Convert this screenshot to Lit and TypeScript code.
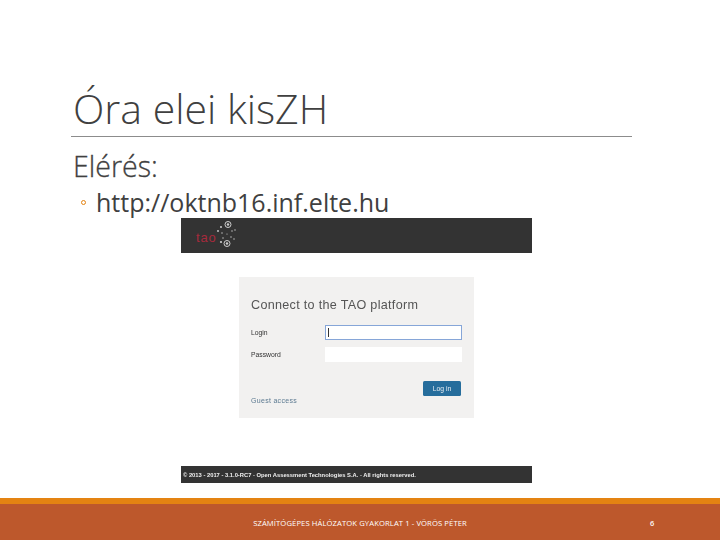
import { LitElement, html, css } from "lit";
import { customElement } from "lit/decorators.js";

@customElement("app-root")
export class AppRoot extends LitElement {
  static styles = css`
    :host { display: block; width: 720px; height: 540px; background: #fff; overflow: hidden; font-family: "Open Sans", "Noto Sans", sans-serif; color: #404040; }
    .slide { width: 720px; height: 540px; display: flex; flex-direction: column; }
    .main { flex: 1; display: flex; flex-direction: column; padding: 0 88px 0 71px; min-height: 0; }
    .title { box-sizing: border-box; border-bottom: 1px solid #8c8c8c; display: flex; align-items: flex-end; padding: 0 0 1px 2px; font-size: 41px; font-weight: 300; line-height: 54px; color: #404040; flex: none; height: 137px; }
    .l1 { margin: 12px 0 0 2px; font-size: 28.6px; font-weight: 300; line-height: 34px; -webkit-text-stroke: 0.3px #404040; flex: none; }
    .l2 { margin: 3px 0 0 10px; font-size: 25px; line-height: 32px; display: flex; align-items: center; gap: 10px; height: 32px; flex: none; }
    .dot { width: 5px; height: 5px; box-sizing: border-box; border: 1px solid #e48312; border-radius: 50%; flex: none; }
    .shot { width: 351px; height: 265px; flex: none; margin: 0 0 0 110px; display: flex; flex-direction: column; font-family: "Liberation Sans", sans-serif; }
    .head { height: 35px; background: #333; flex: none; display: flex; align-items: center; padding-left: 15px; }
    .head svg { display: block; }
    .body { flex: 1; display: flex; justify-content: center; align-items: flex-start; padding-top: 24px; }
    .card { width: 235px; height: 141px; background: #f2f1f0; box-sizing: border-box; padding: 20px 12px 0 12px; display: flex; flex-direction: column; }
    .card h2 { margin: 0; font-size: 12.6px; line-height: 16px; font-weight: 400; color: #555; white-space: nowrap; letter-spacing: 0.3px; filter: blur(0.3px); }
    .row { display: flex; align-items: center; height: 15px; margin-top: 7px; font-size: 6.8px; color: #333; }
    .row.first { margin-top: 12px; }
    .row label { width: 74px; filter: blur(0.25px); }
    .input { width: 137px; height: 15px; box-sizing: border-box; background: #fff; flex: none; display: flex; align-items: center; padding-left: 2px; }
    .input.focus { border: 1px solid #86a6d8; }
    .caret { width: 1px; height: 9px; background: #333; }
    .actions { display: flex; justify-content: flex-end; margin-top: 19px; }
    .btn { width: 38px; height: 15px; margin-right: 1px; background: #266d9c; border-radius: 1.5px; color: #e8eef3; font-size: 6.8px; display: flex; align-items: center; justify-content: center; filter: blur(0.25px); }
    .guest { font-size: 7px; line-height: 8px; color: #5b7990; filter: blur(0.25px); letter-spacing: 0.3px; margin-top: 1px; }
    .foot { height: 17px; background: #333; flex: none; color: #f0f0f0; font-size: 5.8px; display: flex; align-items: center; padding-left: 2px; white-space: nowrap; filter: blur(0.25px); font-weight: 700; }
    .bar { height: 6px; background: #e48312; flex: none; }
    .footer { height: 36px; background: #bd582c; flex: none; display: grid; grid-template-columns: 1fr 60px; align-items: center; color: #fff; }
    .ft { font-size: 7.65px; text-align: center; letter-spacing: 0.1px; padding-left: 60px; margin-top: 2px; white-space: nowrap; }
    .num { font-size: 7.4px; margin-left: -10px; margin-top: 2px; font-weight: 600; }
  `;

  render() {
    return html`<div class="slide">
      <div class="main">
        <div class="title">Óra elei kisZH</div>
        <div class="l1">Elérés:</div>
        <div class="l2"><span class="dot"></span><span>http://oktnb16.inf.elte.hu</span></div>
        <div class="shot">
          <div class="head">
            <svg width="42" height="30" viewBox="0 0 42 30">
              <text x="0" y="21" font-family="Liberation Sans, sans-serif" font-size="13" fill="#a62a3c" letter-spacing="0.8">tao</text>
              <g fill="none" stroke="#cfcfcf" stroke-width="1">
                <circle cx="32" cy="3.5" r="3"/><circle cx="31" cy="22.5" r="3"/>
              </g>
              <g fill="#cfcfcf">
                <circle cx="32" cy="3.5" r="1.2"/><circle cx="31" cy="22.5" r="1.2"/>
                <circle cx="25" cy="6" r="1"/><circle cx="22" cy="10" r="0.9"/><circle cx="26" cy="12" r="0.7"/>
                <circle cx="36" cy="10" r="0.7"/><circle cx="39" cy="9" r="0.7"/><circle cx="35" cy="16" r="0.7"/>
                <circle cx="38" cy="18" r="0.7"/><circle cx="25" cy="21" r="1.1"/><circle cx="27" cy="17" r="0.7"/>
                <circle cx="31" cy="13" r="0.6"/>
              </g>
            </svg>
          </div>
          <div class="body">
            <div class="card">
              <h2>Connect to the TAO platform</h2>
              <div class="row first"><label>Login</label><div class="input focus"><span class="caret"></span></div></div>
              <div class="row"><label>Password</label><div class="input"></div></div>
              <div class="actions"><div class="btn">Log in</div></div>
              <div class="guest">Guest access</div>
            </div>
          </div>
          <div class="foot">© 2013 - 2017 - 3.1.0-RC7 - Open Assessment Technologies S.A. - All rights reserved.</div>
        </div>
      </div>
      <div class="bar"></div>
      <div class="footer">
        <div class="ft">SZÁMÍTÓGÉPES HÁLÓZATOK GYAKORLAT 1 - VÖRÖS PÉTER</div>
        <div class="num">6</div>
      </div>
    </div>`;
  }
}
